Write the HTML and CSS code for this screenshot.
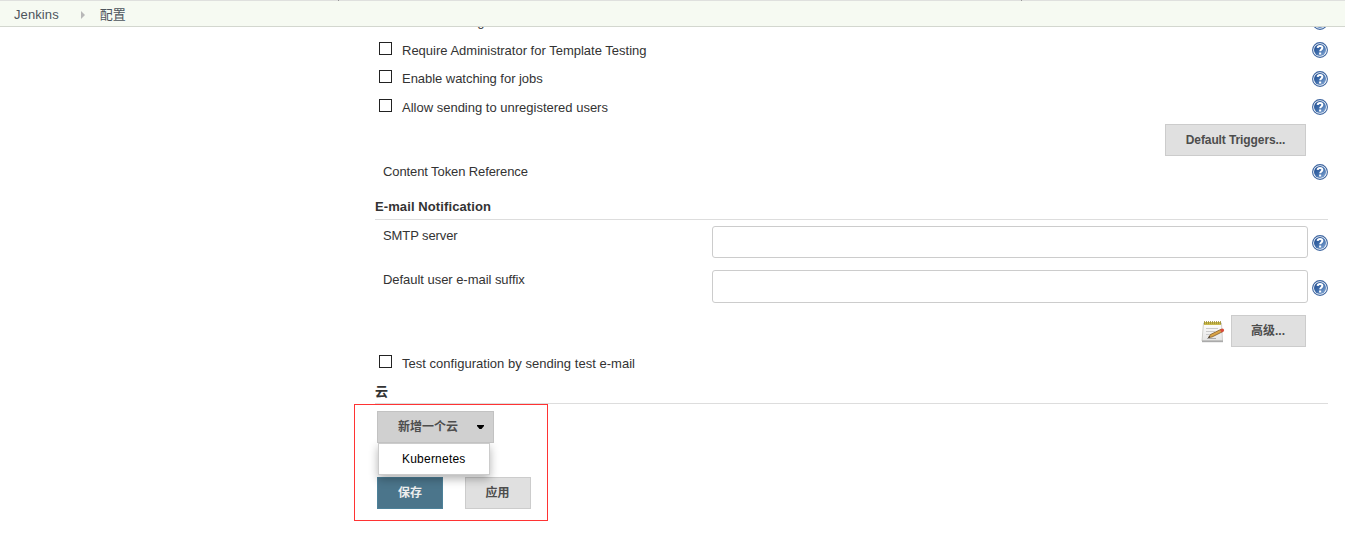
FILE: index.html
```html
<!DOCTYPE html>
<html lang="zh-CN">
<head>
<meta charset="utf-8">
<title>配置 [Jenkins]</title>
<link rel="stylesheet" href="styles.css">
</head>
<body>
<svg class="defs" width="0" height="0" aria-hidden="true">
  <defs>
    <linearGradient id="ball" x1="0" y1="0" x2="1" y2="1">
      <stop offset="0" stop-color="#1c498e"/><stop offset=".5" stop-color="#3f6dab"/><stop offset="1" stop-color="#8fb0da"/>
    </linearGradient>
    <linearGradient id="sheet" x1="0" y1="0" x2="0" y2="1">
      <stop offset="0" stop-color="#fff"/><stop offset="1" stop-color="#e4e4e4"/>
    </linearGradient>
    <symbol id="help" viewBox="0 0 16 16">
      <circle cx="8" cy="8" r="7.4" fill="#fff" stroke="#3d65a0" stroke-width="1.1"/>
      <circle cx="8" cy="8" r="6" fill="url(#ball)"/>
      <path d="M5.600 5.800C5.800 4.500 6.700 3.900 8 3.900c1.500 0 2.400.7 2.400 1.900 0 1.600-2.200 1.700-2.200 3.500" fill="none" stroke="#fff" stroke-width="2"/>
      <rect x="7.100" y="10.500" width="2.100" height="2" fill="#fff"/>
    </symbol>
  </defs>
</svg>
<header class="breadcrumbs">
  <span class="home">Jenkins</span>
  <svg class="crumb-arrow" width="4" height="8" viewBox="0 0 4 8"><path d="M0 0l4 4-4 4z" fill="#b8b8b8"/></svg>
  <span>配置</span>
  <i class="tick tick-a"></i><i class="tick tick-b"></i>
</header>
<main class="config">
  <div class="row check"><span class="box"></span><span class="text first">Enable Debug Mode</span><svg class="help"><use href="#help"/></svg></div>
  <div class="row check"><span class="box"></span><span class="text">Require Administrator for Template Testing</span><svg class="help"><use href="#help"/></svg></div>
  <div class="row check tall"><span class="box"></span><span class="text snug">Enable watching for jobs</span><svg class="help"><use href="#help"/></svg></div>
  <div class="row check"><span class="box"></span><span class="text">Allow sending to unregistered users</span><svg class="help"><use href="#help"/></svg></div>
  <div class="row actions"><span class="btn triggers">Default Triggers...</span></div>
  <div class="row token"><span class="tight">Content Token Reference</span><svg class="help"><use href="#help"/></svg></div>
  <h2 class="section mail">E-mail Notification</h2>
  <div class="row field"><label class="tight" for="smtp">SMTP server</label><input id="smtp" type="text"><svg class="help"><use href="#help"/></svg></div>
  <div class="row field suffix"><label class="snug" for="suffix">Default user e-mail suffix</label><input id="suffix" type="text"><svg class="help"><use href="#help"/></svg></div>
  <div class="row actions advanced">
    <svg class="notepad" width="24" height="24" viewBox="0 0 24 24">
      <path d="M2.500 3h18l1 18h-20.500z" fill="url(#sheet)" stroke="#c4c4bf" stroke-width=".8"/>
      <path d="M1 20.500h21v1.700H1z" fill="#aaa"/>
      <path d="M3 2h17v3H3z" fill="#c9b94b"/>
      <path d="M3.500 1v3M5.500 1v3M7.500 1v3M9.500 1v3M11.500 1v3M13.500 1v3M15.500 1v3M17.500 1v3M19.500 1v3" stroke="#9a8b35" stroke-width=".8"/>
      <path d="M5 8.500h12M5 11.500h9M5 14.500h5" stroke="#cacaca"/>
      <path d="M6 18.500h9" stroke="#aaa"/>
      <path d="M7.500 17.500l2-3 11-5.500 1.500 2.500-11 5.500z" fill="#d9a447" stroke="#775022" stroke-width=".7"/>
      <path d="M19 9.700l2.400-1.200q1.500 0 1.700 1.500l-.3 1.200-2.400 1.200z" fill="#d84b3c"/>
      <path d="M7 17.900l1.400-2 .8 1.300z" fill="#222"/>
    </svg>
    <span class="btn more">高级...</span>
  </div>
  <div class="row check test"><span class="box"></span><span>Test configuration by sending test e-mail</span></div>
  <h2 class="section cloud">云</h2>
  <div class="cloud-area">
    <div class="add-cloud">
      <span class="btn pressed">新增一个云<svg width="7" height="4" viewBox="0 0 7 4"><path d="M0 0h7v1L4.500 4h-2L0 1z" fill="#000"/></svg></span>
      <div class="menu">Kubernetes</div>
    </div>
    <div class="submit"><span class="btn primary">保存</span><span class="btn apply">应用</span></div>
    <div class="highlight"></div>
  </div>
</main>
</body>
</html>
```
FILE: styles.css
```css
* { box-sizing: border-box; }
body {
  margin: 0;
  height: 558px;
  overflow: hidden;
  background: #fff;
  color: #333;
  font: 13px/18px "Liberation Sans", "Noto Sans CJK SC", sans-serif;
}
.defs { position: absolute; }
.breadcrumbs {
  position: relative;
  z-index: 2;
  display: flex;
  align-items: center;
  height: 27px;
  padding: 3px 0 0 14px;
  background: #f6faf2;
  border-top: 1px solid #dfe0de;
  border-bottom: 1px solid #d3d7cf;
  color: #4d545d;
}
.home { letter-spacing: .1px; }
.crumb-arrow { margin: 0 15px 0 22px; }
.tick { position: absolute; top: -1px; width: 1px; height: 1px; background: #999; }
.tick-a { left: 338px; }
.tick-b { left: 1021px; }

.config { width: 953px; margin: -19px 0 0 375px; }
.row { display: flex; align-items: center; }
.help { width: 16px; height: 16px; margin-left: auto; flex: none; }
.check { height: 28px; }
.check .text { padding-top: 2px; }
.check .first { padding-top: 0; }
.check.tall { height: 29px; }
.check.tall .text { padding-top: 0; }
.box { width: 13px; height: 13px; margin: -3px 10px 0 4px; border: 1px solid #222; background: #fff; }
.tall .box, .test .box { margin-top: -5px; }
.snug { letter-spacing: -.04px; }
.tight { letter-spacing: -.1px; }
.actions { height: 38px; justify-content: flex-end; padding-right: 22px; }
.btn {
  display: inline-flex;
  align-items: center;
  justify-content: center;
  height: 32px;
  border: 1px solid #ccc;
  background: #e0e0e0;
  color: #4d4d4d;
  font-size: 12px;
  font-weight: bold;
  white-space: nowrap;
}
.triggers { width: 141px; letter-spacing: -.1px; }
.token { height: 26px; padding-left: 8px; }
.section {
  display: flex;
  align-items: center;
  height: 35px;
  margin: 0;
  padding-top: 10px;
  border-bottom: 1px solid #ddd;
  font-size: 13px;
}
.mail { letter-spacing: .1px; }
.field { height: 44px; padding: 6px 0 0 8px; align-items: flex-start; }
.field label { width: 329px; padding-top: 1px; }
.field input { width: 596px; height: 32px; border: 1px solid #ccc; border-radius: 3px; background: #fff; }
.field .help { margin-top: 9px; }
.suffix { height: 48px; }
.suffix input { height: 33px; }
.suffix .help { margin-top: 10px; }
.advanced { gap: 6px; }
.notepad { margin-top: 2px; }
.more { width: 75px; padding-right: 1px; }
.test { height: 28px; letter-spacing: .025px; }
.cloud { height: 26px; padding-top: 2px; }
.cloud-area { position: relative; padding: 7px 0 0 2px; }
.add-cloud { position: relative; z-index: 1; height: 66px; }
.pressed { width: 117px; padding: 0 9px 0 20px; justify-content: space-between; background: #d0d0d0; border-color: #c2c2c2; }
.menu {
  width: 112px;
  height: 32px;
  margin-left: 1px;
  padding: 6px 0 0 23px;
  border: 1px solid #ccc;
  background: #fff;
  box-shadow: 0 4px 10px rgba(0, 0, 0, .3);
  color: #000;
  font-size: 12px;
  letter-spacing: .22px;
}
.submit { display: flex; gap: 22px; }
.submit .btn { width: 66px; }
.submit .apply { padding-right: 1px; }
.submit .primary { background: #4b758b; border-color: #4d8199; color: #eee; }
.highlight { position: absolute; left: -21px; top: 0; width: 194px; height: 117px; border: 1px solid #f33; }
```
